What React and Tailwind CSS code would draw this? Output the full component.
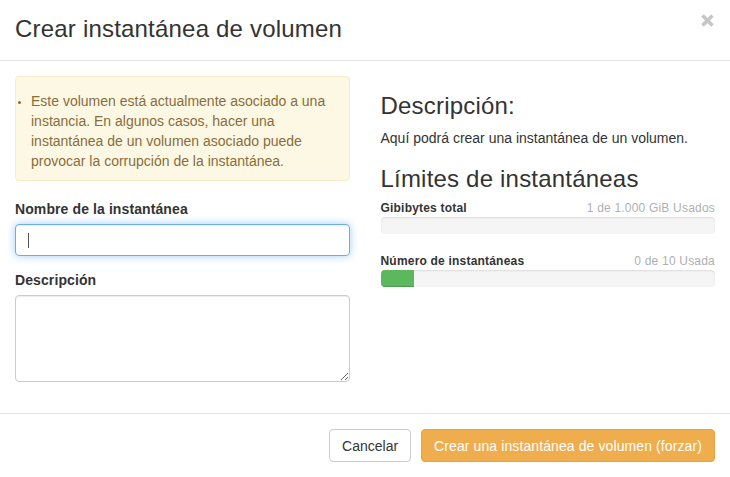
import React from 'react';

function Meter({ label, usage, percent, className = '' }) {
  return (
    <div className={className}>
      <div className="flex items-baseline justify-between text-[12px] leading-[16px] tracking-[0.2px] mb-px">
        <span className="font-bold text-[#333]">{label}</span>
        <span className="text-[#b0b0b0]">{usage}</span>
      </div>
      <div className="h-[17px] rounded-[4px] bg-[#f5f5f5] shadow-[inset_0_1px_2px_rgba(0,0,0,0.1)] overflow-hidden">
        {percent > 0 && (
          <div
            className="h-full bg-[#5cb85c] shadow-[inset_0_-1px_0_rgba(0,0,0,0.15)]"
            style={{ width: `${percent}%` }}
          />
        )}
      </div>
    </div>
  );
}

export default function App() {
  return (
    <div className="h-screen overflow-hidden bg-white text-[14px] leading-[20px] text-[#333] font-['Liberation_Sans',Arial,sans-serif]">
      {/* Header */}
      <div className="flex items-start justify-between px-[15px] pt-[15px] pb-[18px] border-b border-[#e5e5e5]">
        <h4 className="text-[24px] leading-[27px] font-normal tracking-[0.2px]">Crear instantánea de volumen</h4>
        <button className="mt-[-1px] mr-px" aria-label="Close">
          <svg width="13" height="13" viewBox="0 0 13 13">
            <path d="M1.5 1.5 L11.5 11.5 M11.5 1.5 L1.5 11.5" stroke="#c6c6c6" strokeWidth="3.6" />
          </svg>
        </button>
      </div>

      {/* Body */}
      <div className="grid grid-cols-2 gap-[31px] px-[15px] pt-[15px] pb-[31px]">
        <div>
          <div className="rounded-[4px] border border-[#faebcc] bg-[#fcf8e3] text-[#8a6d3b] px-[15px] pt-[14px] pb-[9px] mb-[18px]">
            <ul className="list-disc pl-0 marker:text-[10px]">
              <li>
                Este volumen está actualmente asociado a una instancia. En algunos casos, hacer una instantánea
                de un volumen asociado puede provocar la corrupción de la instantánea.
              </li>
            </ul>
          </div>

          <div className="mb-[14px]">
            <label className="block font-bold mb-[5px] tracking-[0.1px]">Nombre de la instantánea</label>
            <div className="h-[32px] rounded-[4px] border border-[#66afe9] px-[12px] flex items-center shadow-[inset_0_1px_1px_rgba(0,0,0,0.075),0_0_8px_rgba(102,175,233,0.6)]">
              <span className="w-px h-[15px] bg-[#555]" />
            </div>
          </div>

          <div>
            <label className="block font-bold mb-[5px] tracking-[0.1px]">Descripción</label>
            <textarea className="block w-full h-[87px] rounded-[4px] border border-[#ccc] px-[12px] py-[6px] shadow-[inset_0_1px_1px_rgba(0,0,0,0.075)] outline-none" />
          </div>
        </div>

        <div>
          <h3 className="text-[24px] leading-[26px] font-normal mt-[17px] tracking-[0.2px]">Descripción:</h3>
          <p className="mt-[9px]">Aquí podrá crear una instantánea de un volumen.</p>
          <h3 className="text-[24px] leading-[26px] font-normal mt-[18px] tracking-[0.2px]">Límites de instantáneas</h3>
          <Meter className="mt-[8px]" label="Gibibytes total" usage="1 de 1.000 GiB Usados" percent={0} />
          <Meter className="mt-[19px]" label="Número de instantáneas" usage="0 de 10 Usada" percent={10} />
        </div>
      </div>

      {/* Footer */}
      <div className="flex justify-end gap-[10px] px-[15px] pt-[15px] pb-[14px] border-t border-[#e5e5e5]">
        <button className="h-[33px] px-[12px] rounded-[4px] border border-[#ccc] bg-white text-[#333]">
          Cancelar
        </button>
        <button className="h-[33px] px-[12px] rounded-[4px] border border-[#eea236] bg-[#f0ad4e] text-white tracking-[0.1px]">
          Crear una instantánea de volumen (forzar)
        </button>
      </div>
    </div>
  );
}
